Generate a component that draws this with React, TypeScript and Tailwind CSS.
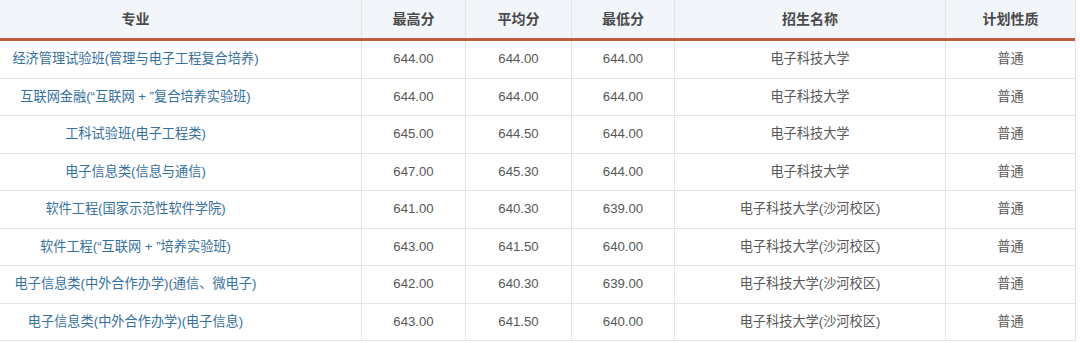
import React from "react";

const rows: [string, string, string, string, string, string][] = [
  ["经济管理试验班(管理与电子工程复合培养)", "644.00", "644.00", "644.00", "电子科技大学", "普通"],
  ["互联网金融(“互联网 + ”复合培养实验班)", "644.00", "644.00", "644.00", "电子科技大学", "普通"],
  ["工科试验班(电子工程类)", "645.00", "644.50", "644.00", "电子科技大学", "普通"],
  ["电子信息类(信息与通信)", "647.00", "645.30", "644.00", "电子科技大学", "普通"],
  ["软件工程(国家示范性软件学院)", "641.00", "640.30", "639.00", "电子科技大学(沙河校区)", "普通"],
  ["软件工程(“互联网 + ”培养实验班)", "643.00", "641.50", "640.00", "电子科技大学(沙河校区)", "普通"],
  ["电子信息类(中外合作办学)(通信、微电子)", "642.00", "640.30", "639.00", "电子科技大学(沙河校区)", "普通"],
  ["电子信息类(中外合作办学)(电子信息)", "643.00", "641.50", "640.00", "电子科技大学(沙河校区)", "普通"],
];

const headers = ["专业", "最高分", "平均分", "最低分", "招生名称", "计划性质"];

const grid = "grid grid-cols-[362px_104px_106px_103px_271px_129px]";

export default function App() {
  return (
    <div
      className="w-[1080px] h-[343px] bg-white overflow-hidden"
      style={{ fontFamily: '"Liberation Sans", "Noto Sans CJK SC", sans-serif' }}
    >
      <div className="w-[1076px] border-r border-[#e2e4e7]">
        <div className={`${grid} h-[41px] bg-[#f2f5f9] border-b-[3px] border-[#c25a3e]`}>
          {headers.map((h, i) => (
            <div
              key={h}
              className={`flex items-center justify-center text-[14px] font-bold text-[#4a4a4a] border-r border-[#e2e4e7] last:border-r-0 ${
                i === 0 ? "pr-[90px]" : ""
              }`}
            >
              {h}
            </div>
          ))}
        </div>
        {rows.map((r, ri) => (
          <div key={ri} className={`${grid} h-[37.5px] border-b border-[#e4e4e4]`}>
            {r.map((c, i) => (
              <div
                key={i}
                className={`flex items-center justify-center text-[13.2px] whitespace-nowrap border-r border-[#e6e6e6] last:border-r-0 ${
                  i === 0 ? "pr-[90px] text-[#36709e]" : "text-[#585858]"
                }`}
              >
                {c}
              </div>
            ))}
          </div>
        ))}
      </div>
    </div>
  );
}
